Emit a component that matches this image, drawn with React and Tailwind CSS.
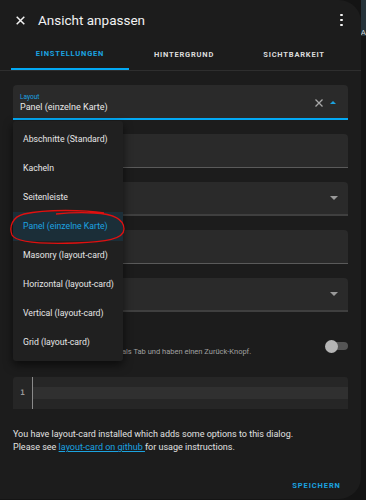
const font = { fontFamily: 'Roboto, "Noto Sans", sans-serif' }

const menuItems = [
  'Abschnitte (Standard)',
  'Kacheln',
  'Seitenleiste',
  'Panel (einzelne Karte)',
  'Masonry (layout-card)',
  'Horizontal (layout-card)',
  'Vertical (layout-card)',
  'Grid (layout-card)',
]

function Field({ arrow, thick }) {
  return (
    <div
      className={
        'h-[34px] bg-[#2a2a2a] rounded-t-[4px] flex items-center justify-end pr-[10px] ' +
        (thick ? 'border-b-2 border-[#3f3f3f]' : 'border-b border-[#5a5a5a]')
      }
    >
      {arrow && (
        <svg width="8" height="4" viewBox="0 0 8 4">
          <path d="M0 0 L8 0 L4 4 Z" fill="#9a9a9a" />
        </svg>
      )}
    </div>
  )
}

export default function App() {
  return (
    <div className="w-[366px] h-[500px] bg-[#141414] flex overflow-hidden" style={font}>
      {/* Dialog */}
      <div className="relative w-[362px] h-[499px] bg-[#1c1c1c] rounded-r-[22px] flex flex-col">
        {/* Header */}
        <div className="h-[40px] flex items-center pl-[16px] pr-[18px]">
          <svg width="9" height="9" viewBox="0 0 9 9">
            <path d="M0.7 0.7 L8.3 8.3 M8.3 0.7 L0.7 8.3" stroke="#f2f2f2" strokeWidth="1.5" />
          </svg>
          <span className="ml-[13px] text-[13.5px] text-[#f2f2f2] flex-1">Ansicht anpassen</span>
          <div className="flex flex-col gap-[2.5px] items-center">
            <span className="w-[2.5px] h-[2.5px] rounded-full bg-[#f2f2f2]" />
            <span className="w-[2.5px] h-[2.5px] rounded-full bg-[#f2f2f2]" />
            <span className="w-[2.5px] h-[2.5px] rounded-full bg-[#f2f2f2]" />
          </div>
        </div>

        {/* Tabs */}
        <div className="h-[31px] flex border-b border-[#2e2e2e] pl-[11px]">
          <div className="w-[118px] flex items-center justify-center border-b-2 border-[#03a9f4] text-[#1ba3e0] text-[7.5px] font-bold tracking-[0.8px]">
            EINSTELLUNGEN
          </div>
          <div className="w-[110px] flex items-center justify-center text-[#dcdcdc] text-[7.5px] font-bold tracking-[0.8px]">
            HINTERGRUND
          </div>
          <div className="w-[110px] flex items-center justify-center text-[#dcdcdc] text-[7.5px] font-bold tracking-[0.8px]">
            SICHTBARKEIT
          </div>
        </div>

        {/* Form */}
        <div className="px-[13px] pt-[14px] flex flex-col gap-[14px]">
          <div className="h-[35px] bg-[#2a2a2a] rounded-t-[4px] border-b-2 border-[#03a9f4] flex items-center pl-[7px] pr-[12px]">
            <div className="flex-1 flex flex-col pt-[3px]">
              <span className="text-[6.5px] leading-[8px] text-[#1ba3e0]">Layout</span>
              <span className="text-[9px] leading-[12px] text-[#e8e8e8]">Panel (einzelne Karte)</span>
            </div>
            <svg width="8" height="8" viewBox="0 0 8 8" className="mt-[2px]">
              <path d="M0.5 0.5 L7.5 7.5 M7.5 0.5 L0.5 7.5" stroke="#a8a8a8" strokeWidth="1.3" />
            </svg>
            <svg width="6" height="3" viewBox="0 0 6 3" className="ml-[7px] mt-[1px]">
              <path d="M0 3 L6 3 L3 0 Z" fill="#1ba3e0" />
            </svg>
          </div>
          <Field />
          <Field arrow thick />
          <Field />
          <Field arrow thick />
        </div>

        {/* Subview toggle */}
        <div className="px-[13px] mt-[30px] flex items-start">
          <span className="flex-1 pt-[5px] text-[7.5px] leading-[10px] text-[#a0a0a0]">
            Unteransichten erscheinen nicht als Tab und haben einen Zurück-Knopf.
          </span>
          <div className="relative w-[22px] h-[8px] rounded-full bg-[#555]">
            <span className="absolute left-[-1px] top-[-2.5px] w-[13px] h-[13px] rounded-full bg-[#b5b5b5]" />
          </div>
        </div>

        {/* Code editor */}
        <div className="mx-[13px] mt-[20px] h-[32px] bg-[#262626] flex rounded-t-[3px]">
          <div className="w-[19px] flex items-center justify-center text-[7.5px] text-[#9a9a9a] font-bold" style={{ fontFamily: '"DejaVu Sans Mono", monospace' }}>
            1
          </div>
          <div className="w-[1px] bg-[#8a8a8a]" />
          <div className="flex-1 flex flex-col justify-center">
            <div className="h-[12px] bg-[#303030]" />
          </div>
        </div>

        {/* Info */}
        <div className="px-[13px] mt-[19px] text-[9px] leading-[13px] text-[#e1e1e1]">
          <p>You have layout-card installed which adds some options to this dialog.</p>
          <p>
            Please see <span className="text-[#1ba3e0] underline">layout-card on github </span>for usage instructions.
          </p>
        </div>

        {/* Footer */}
        <div className="mt-auto h-[30px] mb-[1px] pt-[12px] flex items-start justify-end pr-[20px]">
          <span className="text-[7.5px] font-bold tracking-[0.9px] text-[#1ba3e0]">SPEICHERN</span>
        </div>

        {/* Dropdown menu */}
        <div className="absolute left-[13px] top-[121px] w-[110px] py-[4px] bg-[#202020] rounded-[3px] shadow-[0_4px_10px_rgba(0,0,0,0.6)]">
          {menuItems.map((item, i) => (
            <div
              key={item}
              className={
                'h-[29px] flex items-center pl-[10px] text-[8.7px] ' +
                (i === 3 ? 'bg-[#1b2e38] text-[#1ba3e0]' : 'text-[#e6e6e6]')
              }
            >
              {item}
            </div>
          ))}
        </div>

        {/* Red annotation */}
        <svg className="absolute left-[6px] top-[207px]" width="124" height="40" viewBox="0 0 124 40">
          <path
            d="M98 6 C 80 3, 40 2, 18 7 C 6 10, 3 20, 6 28 C 10 36, 40 37, 70 36 C 100 35, 118 32, 118 22 C 118 12, 108 7, 88 6 C 70 5, 60 6, 50 7"
            fill="none"
            stroke="#e01010"
            strokeWidth="1.3"
          />
        </svg>
      </div>

      {/* Background behind dialog */}
      <div className="flex-1 flex flex-col">
        <div className="h-[36px] bg-[#26333a] pt-[18px]">
          <span className="text-[8px] text-[#cfd8dc]">A</span>
        </div>
        <div className="flex-1 bg-[#141414]" />
      </div>
    </div>
  )
}
